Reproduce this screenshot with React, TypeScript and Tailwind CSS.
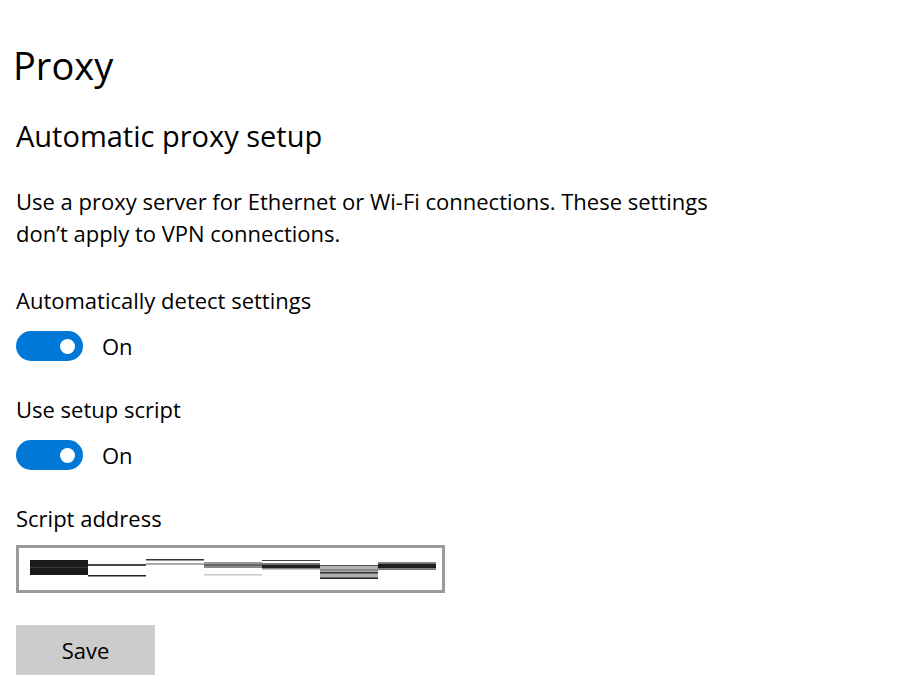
import React from "react";

const Toggle = () => (
  <div className="flex items-center">
    <div className="flex h-[30px] w-[67px] items-center justify-end rounded-full bg-[#0078d7] pr-[8px]">
      <div className="h-[15px] w-[15px] rounded-full bg-white" />
    </div>
    <span className="ml-[19px] text-[22px] leading-[28px]">On</span>
  </div>
);

// redacted address, drawn as the scrambled bars in the picture
const Scrambled = () => (
  <svg width="406" height="24" viewBox="0 0 406 24">
    <rect x="0" y="3" width="58" height="15" fill="#1a1a1a" />
    <rect x="0" y="10" width="58" height="1" fill="#3a3a3a" />
    <rect x="58" y="7" width="58" height="2" fill="#444" />
    <rect x="58" y="18" width="58" height="1.5" fill="#222" />
    <rect x="116" y="2" width="58" height="1.5" fill="#333" />
    <rect x="116" y="6.5" width="58" height="1" fill="#555" />
    <rect x="174" y="5" width="58" height="2" fill="#999" />
    <rect x="174" y="7" width="58" height="2" fill="#666" />
    <rect x="174" y="9" width="58" height="2" fill="#8a8a8a" />
    <rect x="174" y="17" width="58" height="1.5" fill="#c8c8c8" />
    <rect x="232" y="3" width="58" height="1" fill="#444" />
    <rect x="232" y="6" width="58" height="1.5" fill="#777" />
    <rect x="232" y="7.5" width="58" height="4" fill="#222" />
    <rect x="232" y="11.5" width="58" height="1" fill="#888" />
    <rect x="290" y="8" width="58" height="1" fill="#555" />
    <rect x="290" y="9" width="58" height="13" fill="#b0b0b0" />
    <rect x="290" y="12" width="58" height="2" fill="#8a8a8a" />
    <rect x="290" y="15" width="58" height="1.5" fill="#333" />
    <rect x="290" y="20.5" width="58" height="1.5" fill="#222" />
    <rect x="348" y="5" width="58" height="1.5" fill="#888" />
    <rect x="348" y="6.5" width="58" height="5" fill="#1f1f1f" />
    <rect x="348" y="11.5" width="58" height="1.5" fill="#777" />
  </svg>
);

const App = () => {
  return (
    <div className="min-h-screen bg-white pl-4 text-black" style={{ fontFamily: "'Open Sans', 'Noto Sans', sans-serif" }}>
      <h1 className="-ml-[3px] pt-[41px] text-[38px] leading-[48px] font-normal">Proxy</h1>
      <h2 className="mt-[29px] text-[29px] leading-[36px] font-normal">Automatic proxy setup</h2>
      <p className="mt-[31px] w-[700px] text-[22px] leading-[32px]">
        Use a proxy server for Ethernet or Wi-Fi connections. These settings don’t apply to VPN connections.
      </p>
      <div className="mt-[37px] text-[22px] leading-[28px]">Automatically detect settings</div>
      <div className="mt-[17px]">
        <Toggle />
      </div>
      <div className="mt-[34px] text-[22px] leading-[28px]">Use setup script</div>
      <div className="mt-[17px]">
        <Toggle />
      </div>
      <div className="mt-[34px] text-[22px] leading-[28px]">Script address</div>
      <div className="mt-[13px] flex h-[48px] w-[429px] items-center border-[3px] border-[#9a9a9a] pl-[11px]">
        <Scrambled />
      </div>
      <button className="mt-[32px] h-[50px] w-[139px] bg-[#cccccc] text-[22px]">Save</button>
    </div>
  );
};

export default App;
